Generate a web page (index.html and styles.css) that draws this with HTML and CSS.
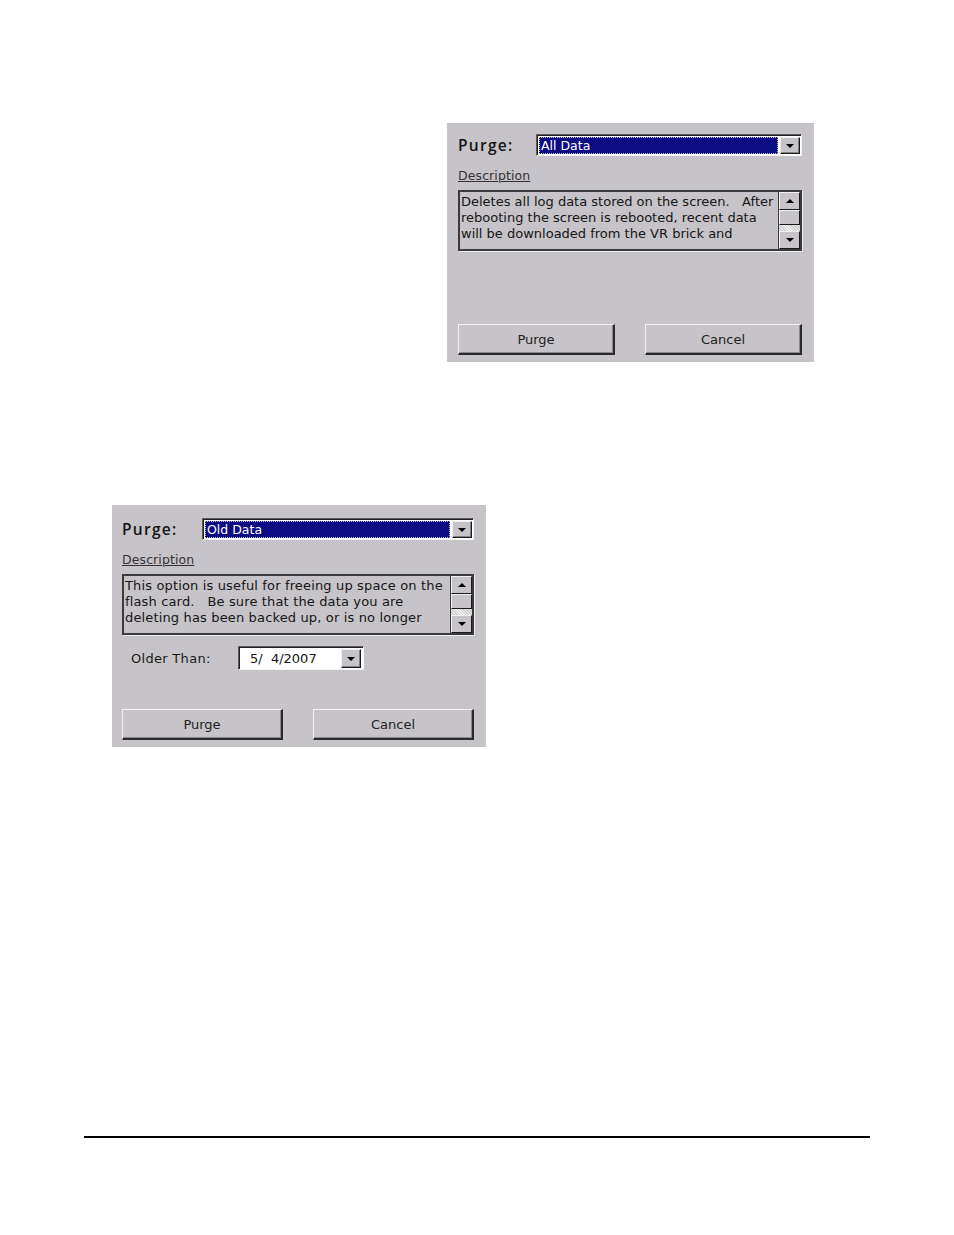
FILE: index.html
```html
<!DOCTYPE html>
<html>
<head>
<meta charset="utf-8">
<link rel="stylesheet" href="styles.css">
</head>
<body>
<div class="page">
  <div class="dialog d1">
    <div class="row-purge">
      <span class="purge-label">Purge:</span>
      <div class="combo">
        <div class="combo-sel"><span class="focus">All Data</span></div>
        <div class="btn-drop"><span class="tri-down"></span></div>
      </div>
    </div>
    <div class="desc-label">Description</div>
    <div class="textbox">
      <div class="tb-text">Deletes all log data stored on the screen.&nbsp;&nbsp;&nbsp;After<br>rebooting the screen is rebooted, recent data<br>will be downloaded from the VR brick and</div>
      <div class="scroll">
        <div class="sb-btn"><span class="tri-up"></span></div>
        <div class="sb-thumb"></div>
        <div class="sb-track"></div>
        <div class="sb-btn"><span class="tri-down"></span></div>
      </div>
    </div>
    <div class="spacer"></div>
    <div class="buttons">
      <div class="btn">Purge</div>
      <div class="btn">Cancel</div>
    </div>
  </div>

  <div class="dialog d2">
    <div class="row-purge">
      <span class="purge-label">Purge:</span>
      <div class="combo">
        <div class="combo-sel"><span class="focus">Old Data</span></div>
        <div class="btn-drop"><span class="tri-down"></span></div>
      </div>
    </div>
    <div class="desc-label">Description</div>
    <div class="textbox">
      <div class="tb-text">This option is useful for freeing up space on the<br>flash card.&nbsp;&nbsp;&nbsp;Be sure that the data you are<br>deleting has been backed up, or is no longer</div>
      <div class="scroll">
        <div class="sb-btn"><span class="tri-up"></span></div>
        <div class="sb-thumb"></div>
        <div class="sb-track"></div>
        <div class="sb-btn"><span class="tri-down"></span></div>
      </div>
    </div>
    <div class="row-older">
      <span class="older-label">Older Than:</span>
      <div class="datebox">
        <span class="date-text">5/&nbsp;&nbsp;4/2007</span>
        <div class="btn-drop"><span class="tri-down"></span></div>
      </div>
    </div>
    <div class="spacer"></div>
    <div class="buttons">
      <div class="btn">Purge</div>
      <div class="btn">Cancel</div>
    </div>
  </div>

  <div class="rule"></div>
</div>
</body>
</html>
```

FILE: styles.css
```css
html, body {
  margin: 0;
  padding: 0;
  background: #ffffff;
}
.page {
  width: 954px;
  height: 1235px;
  overflow: hidden;
  font-family: "DejaVu Sans", Verdana, sans-serif;
  display: flex;
  flex-direction: column;
}
.dialog {
  box-sizing: border-box;
  background: #c6c4c8;
  display: flex;
  flex-direction: column;
}
.d1 {
  margin: 123px 0 0 447px;
  width: 367px;
  height: 239px;
  padding: 11px 12px 7px 11px;
}
.d2 {
  margin: 143px 0 0 112px;
  width: 374px;
  height: 242px;
  padding: 13px 12px 7px 10px;
}
.row-purge {
  display: flex;
  align-items: center;
  height: 22px;
}
.purge-label {
  font-family: "Open Sans", "DejaVu Sans", sans-serif;
  font-weight: 600;
  font-size: 15.5px;
  letter-spacing: 1.3px;
  color: #141414;
  width: 78px;
}
.d2 .purge-label { width: 80px; }
.combo {
  flex: 1;
  height: 22px;
  box-sizing: border-box;
  display: flex;
  border-top: 1px solid #5a5a5a;
  border-left: 1px solid #5a5a5a;
  border-right: 1px solid #f4f4f4;
  border-bottom: 1px solid #f4f4f4;
  box-shadow: inset 1px 1px 0 #202020;
  background: #ffffff;
  padding: 2px 1px 1px 2px;
  gap: 2px;
}
.combo-sel {
  flex: 1;
  background: #0c0c84;
  color: #ffffff;
  font-size: 12.5px;
  line-height: 17px;
  display: flex;
}
.focus {
  flex: 1;
  border: 1px dotted #c8c8c8;
  padding-left: 1px;
  line-height: 15px;
}
.btn-drop {
  width: 20px;
  box-sizing: border-box;
  background: #c6c4c8;
  border-top: 1px solid #f0f0f0;
  border-left: 1px solid #f0f0f0;
  border-right: 1px solid #1a1a1a;
  border-bottom: 1px solid #1a1a1a;
  box-shadow: inset -1px -1px 0 #808080;
  display: flex;
  align-items: center;
  justify-content: center;
}
.tri-down {
  width: 0;
  height: 0;
  border-left: 4px solid transparent;
  border-right: 4px solid transparent;
  border-top: 4px solid #000;
}
.tri-up {
  width: 0;
  height: 0;
  border-left: 4px solid transparent;
  border-right: 4px solid transparent;
  border-bottom: 4px solid #000;
}
.desc-label {
  margin-top: 11px;
  font-size: 12.5px;
  color: #333333;
  text-decoration: underline;
  line-height: 18px;
  letter-spacing: 0.1px;
}
.textbox {
  margin-top: 5px;
  height: 61px;
  box-sizing: border-box;
  border: 2px solid #3a3a3a;
  box-shadow: 1px 1px 0 #eeeeee;
  display: flex;
  background: #c6c4c8;
}
.tb-text {
  flex: 1;
  font-size: 13px;
  letter-spacing: 0.15px;
  line-height: 16px;
  color: #151515;
  padding: 2px 0 0 1px;
  white-space: nowrap;
  overflow: hidden;
}
.d1 .tb-text {
  letter-spacing: 0;
}
.scroll {
  width: 21px;
  display: flex;
  flex-direction: column;
  border-left: 1px solid #3a3a3a;
}
.sb-btn {
  height: 18px;
  box-sizing: border-box;
  background: #c6c4c8;
  border-top: 1px solid #f0f0f0;
  border-left: 1px solid #f0f0f0;
  border-right: 1px solid #1a1a1a;
  border-bottom: 1px solid #1a1a1a;
  display: flex;
  align-items: center;
  justify-content: center;
}
.sb-thumb {
  height: 15px;
  box-sizing: border-box;
  background: #c6c4c8;
  border-top: 1px solid #f0f0f0;
  border-left: 1px solid #f0f0f0;
  border-right: 1px solid #1a1a1a;
  border-bottom: 1px solid #1a1a1a;
}
.sb-track {
  flex: 1;
  background-color: #e6e6e6;
  background-image: repeating-linear-gradient(45deg, #d0d0d0 0 1px, #efefef 1px 2px);
}
.row-older {
  display: flex;
  align-items: center;
  margin-top: 11px;
  padding-left: 9px;
}
.older-label {
  font-size: 13px;
  color: #1a1a1a;
  width: 107px;
  letter-spacing: 0.3px;
}
.datebox {
  width: 126px;
  height: 24px;
  box-sizing: border-box;
  background: #ffffff;
  border-top: 1px solid #5a5a5a;
  border-left: 1px solid #5a5a5a;
  border-right: 1px solid #f4f4f4;
  border-bottom: 1px solid #f4f4f4;
  box-shadow: inset 1px 1px 0 #202020;
  display: flex;
  align-items: stretch;
  padding: 2px 2px 1px 2px;
}
.date-text {
  flex: 1;
  font-size: 13px;
  color: #151515;
  padding-left: 9px;
  line-height: 19px;
}
.spacer {
  flex: 1;
}
.buttons {
  display: flex;
  justify-content: space-between;
  height: 31px;
}
.btn {
  width: 157px;
  box-sizing: border-box;
  border-top: 1px solid #f2f2f2;
  border-left: 1px solid #f2f2f2;
  border-right: 2px solid #2a2a2a;
  border-bottom: 2px solid #2a2a2a;
  box-shadow: inset -1px -1px 0 #8a8a8a;
  background: #c6c4c8;
  display: flex;
  align-items: center;
  justify-content: center;
  font-size: 13px;
  color: #222222;
  padding-top: 1px;
}
.d2 .btn { width: 161px; }
.rule {
  margin: 389px 0 0 84px;
  width: 786px;
  height: 2px;
  background: #000000;
}
```
